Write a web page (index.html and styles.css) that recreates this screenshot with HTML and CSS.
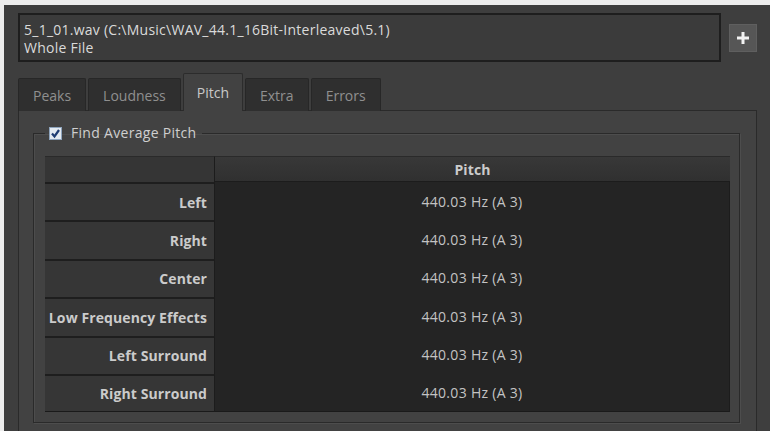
FILE: index.html
```html
<!DOCTYPE html>
<html lang="en">
<head>
  <meta charset="UTF-8">
  <title>Pitch</title>
  <link rel="stylesheet" href="styles.css">
</head>
<body>
  <div class="app">

    <!-- Archivo analizado -->
    <div class="file-row">
      <div class="file-box">
        <div>5_1_01.wav (C:\Music\WAV_44.1_16Bit-Interleaved\5.1)</div>
        <div>Whole File</div>
      </div>
      <button class="add-button" title="Add">
        <svg width="16" height="16" viewBox="0 0 16 16"><path d="M8 2v12M2 8h12" stroke="#f2f2f2" stroke-width="3"/></svg>
      </button>
    </div>

    <!-- Pestañas -->
    <div class="tabs">
      <div class="tab">Peaks</div>
      <div class="tab">Loudness</div>
      <div class="tab active">Pitch</div>
      <div class="tab">Extra</div>
      <div class="tab">Errors</div>
    </div>

    <div class="panel">
      <fieldset class="group">
        <legend>
          <span class="check">
            <svg width="11" height="11" viewBox="0 0 11 11"><path d="M2 5.5l2.5 3L9 2" stroke="#1f3d73" stroke-width="2.2" fill="none"/></svg>
          </span>
          Find Average Pitch
        </legend>

        <table class="results">
          <thead>
            <tr><th class="corner"></th><th class="col">Pitch</th></tr>
          </thead>
          <tbody>
            <tr><th>Left</th><td>440.03 Hz (A 3)</td></tr>
            <tr><th>Right</th><td>440.03 Hz (A 3)</td></tr>
            <tr><th>Center</th><td>440.03 Hz (A 3)</td></tr>
            <tr><th>Low Frequency Effects</th><td>440.03 Hz (A 3)</td></tr>
            <tr><th>Left Surround</th><td>440.03 Hz (A 3)</td></tr>
            <tr><th>Right Surround</th><td>440.03 Hz (A 3)</td></tr>
          </tbody>
        </table>
      </fieldset>
    </div>

  </div>
</body>
</html>
```

FILE: styles.css
```css
html, body {
  height: 100%;
}

body {
  margin: 0;
  padding: 5px 0 0 4px;
  box-sizing: border-box;
  background-color: #ededed;
  font-family: "Open Sans", "Noto Sans", sans-serif;
  font-size: 14px;
  letter-spacing: 0.3px;
  overflow: hidden;
}

.app {
  height: 100%;
  background-color: #3e3e3e;
  padding: 8px 0 0 14px;
  box-sizing: border-box;
}

/* fila del archivo */
.file-row {
  display: flex;
  align-items: center;
  gap: 8px;
}

.file-box {
  width: 703px;
  height: 49px;
  box-sizing: border-box;
  border: 2px solid #1e1e1e;
  background-color: #3b3b3b;
  color: #dadada;
  padding: 6px 4px 2px;
  line-height: 18px;
  letter-spacing: 0.25px;
}

.add-button {
  width: 28px;
  height: 28px;
  padding: 0;
  border: 1px solid #5f5f5f;
  background-color: #565656;
  display: flex;
  align-items: center;
  justify-content: center;
}

/* pestañas */
.tabs {
  display: flex;
  align-items: flex-end;
  gap: 2px;
  margin-top: 11px;
  position: relative;
  z-index: 1;
  margin-bottom: -1px;
}

.tab {
  height: 33px;
  box-sizing: border-box;
  padding: 0 14px;
  display: flex;
  align-items: center;
  background-color: #2f2f2f;
  border: 1px solid #272727;
  border-bottom: none;
  border-radius: 2px 2px 0 0;
  color: #8f8f8f;
  letter-spacing: 0;
}

.tab.active {
  height: 38px;
  padding: 0 13px;
  background-color: #424242;
  border-color: #2c2c2c;
  color: #c9c9c9;
}

.panel {
  width: 739px;
  height: 330px;
  box-sizing: border-box;
  border: 1px solid #2a2a2a;
  background-color: #424242;
  padding: 13px 16px 0 14px;
}

/* grupo con casilla */
.group {
  margin: 0;
  padding: 14px 9px 10px 11px;
  border: 1px solid #2a2a2a;
  box-shadow: 1px 1px 0 #4d4d4d, inset 1px 1px 0 #4d4d4d;
}

.group legend {
  margin-left: 0;
  padding: 0 5px 0 4px;
  color: #cfcfcf;
  display: flex;
  align-items: center;
  gap: 9px;
  line-height: 18px;
}

.check {
  width: 13px;
  height: 13px;
  background-color: #e3eaf1;
  border: 1px solid #8ea4bd;
  box-sizing: border-box;
  display: flex;
  align-items: center;
  justify-content: center;
}

/* tabla de resultados */
.results {
  width: 685px;
  border-collapse: separate;
  border-spacing: 0;
  background-color: #232323;
}

.results th {
  width: 170px;
  height: 38.4px;
  box-sizing: border-box;
  padding: 0 7px 0 0;
  text-align: right;
  font-weight: 700;
  letter-spacing: 0.1px;
  color: #cbcbcb;
  background-color: #363636;
  border-top: 2px solid #1e1e1e;
  border-right: 1px solid #1c1c1c;
}

.results thead th {
  height: 26px;
  border-top: 1px solid #2a2a2a;
}

.results th.corner {
  background-color: #353535;
}

.results th.col {
  width: auto;
  padding: 0;
  text-align: center;
  background: linear-gradient(#383838, #303030);
  border-right: none;
  border-bottom: 1px solid #1c1c1c;
}

.results td {
  text-align: center;
  color: #c3c3c3;
  background-color: #242424;
  border-right: 1px solid #1c1c1c;
}

.results tbody tr:last-child th,
.results tbody tr:last-child td {
  border-bottom: 1px solid #1a1a1a;
}
```
